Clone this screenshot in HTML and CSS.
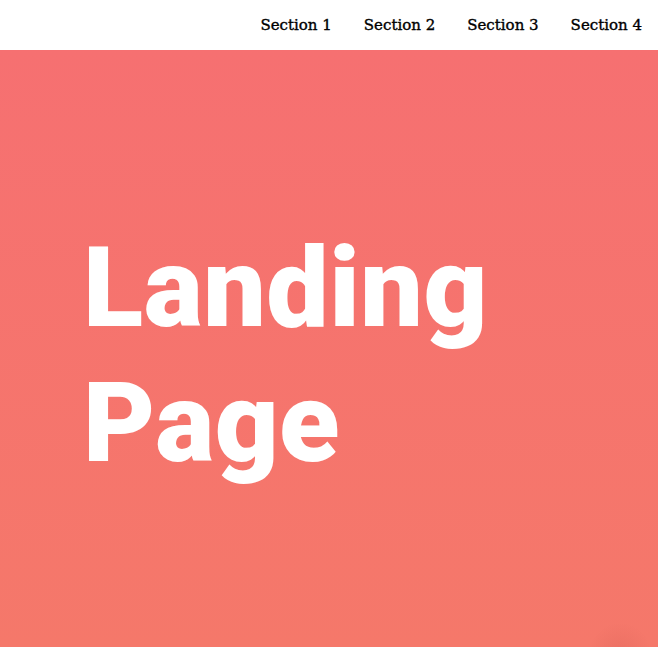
FILE: index.html
```html
<!DOCTYPE html>
<html lang="en">
<head>
<meta charset="utf-8">
<title>Landing Page</title>
<link rel="stylesheet" href="styles.css">
</head>
<body>
<header class="navbar">
  <nav class="nav">
    <a class="nav-link" href="#s1">Section 1</a>
    <a class="nav-link" href="#s2">Section 2</a>
    <a class="nav-link" href="#s3">Section 3</a>
    <a class="nav-link" href="#s4">Section 4</a>
  </nav>
</header>
<main>
  <section class="hero">
    <h1 class="hero-title">Landing<br>Page</h1>
    <span class="scroll-hint"></span>
  </section>
</main>
</body>
</html>
```

FILE: styles.css
```css
* { box-sizing: border-box; }
html, body { margin: 0; padding: 0; }
body {
  overflow: hidden;
  background: #fff;
}
.navbar {
  height: 50px;
  background: #fff;
  display: flex;
  justify-content: flex-end;
  align-items: center;
  padding-right: 16px;
}
.nav {
  display: flex;
  gap: 32px;
}
.nav-link {
  font-family: "DejaVu Serif", serif;
  font-size: 15px;
  color: #000;
  -webkit-text-stroke: 0.35px #000;
  text-decoration: none;
}
.hero {
  position: relative;
  height: 597px;
  background: linear-gradient(to bottom, #f67071, #f5786a);
  padding: 171px 0 0 83px;
  overflow: hidden;
}
.hero-title {
  margin: 0;
  font-family: Roboto, sans-serif;
  font-weight: 900;
  font-size: 111px;
  line-height: 135px;
  letter-spacing: 0.5px;
  color: #fff;
}
.scroll-hint {
  position: absolute;
  left: 588px;
  top: 572px;
  width: 64px;
  height: 64px;
  border-radius: 50%;
  background: radial-gradient(circle, rgba(150,40,40,0.10), rgba(150,40,40,0) 70%);
}
```
